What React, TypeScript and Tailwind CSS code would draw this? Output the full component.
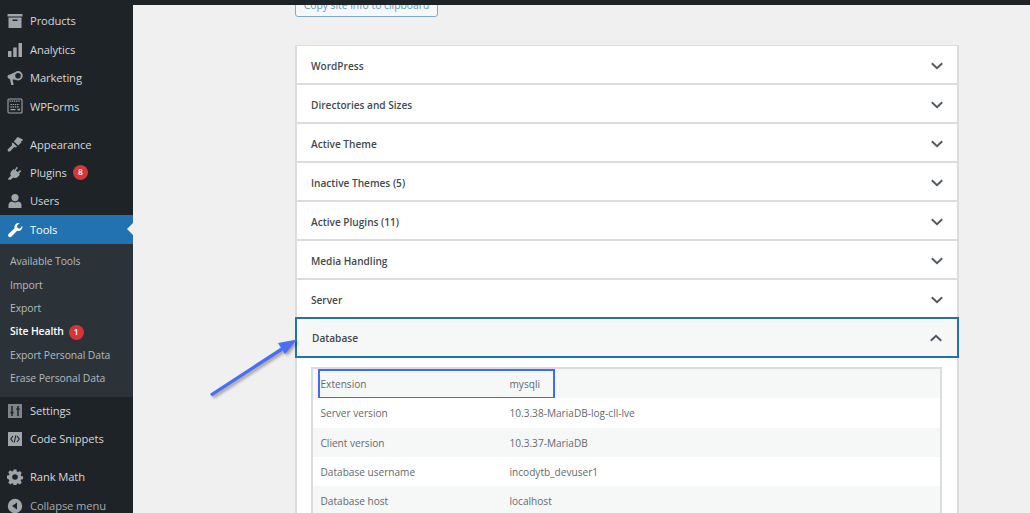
import React from "react";

const F = "[font-family:'Open_Sans','Noto_Sans',sans-serif]";

type IconProps = { className?: string };

const Box = ({ className }: IconProps) => (
  <svg viewBox="0 0 16 16" className={className} fill="currentColor">
    <path d="M0.5 1h15v2.5H0.5z" />
    <path fillRule="evenodd" d="M1.5 4.5h13V15h-13zM5.5 6.5v1.6h5V6.5z" />
  </svg>
);
const Bars = ({ className }: IconProps) => (
  <svg viewBox="0 0 16 16" className={className} fill="currentColor">
    <path d="M1 9h3.5v6H1zM6.2 5.5h3.5V15H6.2zM11.5 1H15v14h-3.5z" />
  </svg>
);
const Megaphone = ({ className }: IconProps) => (
  <svg viewBox="0 0 16 16" className={className} fill="currentColor">
    <path fillRule="evenodd" d="M11 1a4.5 4.5 0 1 1 0 9.5c-1 0-1.5-.3-2.4-.7L5.6 9.5 6.6 15H4.2L3 9.2C1.6 9 .5 8 .5 6.6S1.4 4.7 3 4.4L8 2.2C9 1.4 10 1 11 1zm0 2a2.8 2.8 0 1 0 0 5.6A2.8 2.8 0 0 0 11 3z" />
  </svg>
);
const Forms = ({ className }: IconProps) => (
  <svg viewBox="0 0 16 16" className={className} fill="none" stroke="currentColor">
    <rect x="1" y="1" width="14" height="14" rx="1" strokeWidth="1.1" />
    <path d="M2.5 3.2h11M3.5 6.5h9M3.5 8.8h9" strokeWidth="1.2" strokeDasharray="1.4 .8" />
    <path d="M3.5 11.6h5" strokeWidth="1.3" />
    <path d="M10.5 11.6h2.5" strokeWidth="1.6" />
  </svg>
);
const Brush = ({ className }: IconProps) => (
  <svg viewBox="0 0 16 16" className={className} fill="currentColor">
    <path d="M10.5 1 16 3.6l-1 1.6-1-.2.4 1.4-3.2 3.1-4.3-4.1z" />
    <path d="M5.8 6.4 10 10.5l-1 1-1.7-.5L3 15.5 1 15.5.6 13.5 5 9.2 4.7 7.4z" />
  </svg>
);
const Plug = ({ className }: IconProps) => (
  <svg viewBox="0 0 16 16" className={className} fill="currentColor">
    <path d="M9.8 1.8 11 3 8.8 5.2 10.8 7.2 13 5l1.2 1.2-2.2 2.3 1 1-2.2 2.4c-1.4 1.2-3 1.3-4.5.5L3.8 14.8H1.2v-1.4l2.6-2.6C3 9.3 3.2 7.7 4.4 6.3L6.6 4l1 1z" />
  </svg>
);
const User = ({ className }: IconProps) => (
  <svg viewBox="0 0 16 16" className={className} fill="currentColor">
    <circle cx="8" cy="4.6" r="3.6" />
    <path d="M1.5 15v-3c0-2 1.8-3.2 3.6-3.4 1.6 1.2 4.2 1.2 5.8 0 1.8.2 3.6 1.4 3.6 3.4v3z" />
  </svg>
);
const Wrench = ({ className }: IconProps) => (
  <svg viewBox="0 0 16 16" className={className} fill="currentColor">
    <path d="M15.2 3.8c.5 1.7 0 3.2-1.2 4.2-1.1.9-2.5 1.1-3.8.7L4.5 14.6c-.8.8-2.1.8-2.9 0-.8-.8-.7-2 .1-2.8l5.9-5.6C7.2 4.9 7.5 3.4 8.6 2.3 9.7 1.3 11.1.9 12.5 1.2L9.9 3.8l.6 2.3 2.3.6z" />
  </svg>
);
const Sliders = ({ className }: IconProps) => (
  <svg viewBox="0 0 16 16" className={className}>
    <rect x="1" y="1" width="14" height="14" fill="currentColor" opacity=".75" />
    <path d="M5 3v10M11 3v10M3.4 9.5h3.2M9.4 6h3.2" stroke="#1d2327" strokeWidth="1.5" fill="none" />
  </svg>
);
const Code = ({ className }: IconProps) => (
  <svg viewBox="0 0 16 16" className={className}>
    <rect x="1" y="1" width="14" height="14" fill="currentColor" />
    <path d="M6 5 3.8 8 6 11M10 5l2.2 3L10 11M8.8 4.5 7.2 11.5" stroke="#1d2327" strokeWidth="1.1" fill="none" />
  </svg>
);
const Gear = ({ className }: IconProps) => (
  <svg viewBox="0 0 16 16" className={className} fill="currentColor">
    <path
      fillRule="evenodd"
      d="M6.6.5h2.8l.4 2.1 1.2.5 1.8-1.2 2 2-1.2 1.8.5 1.2 2.1.4v2.8l-2.1.4-.5 1.2 1.2 1.8-2 2-1.8-1.2-1.2.5-.4 2.1H6.6l-.4-2.1-1.2-.5-1.8 1.2-2-2 1.2-1.8-.5-1.2L-.2 9.4V6.6l2.1-.4.5-1.2-1.2-1.8 2-2L5 2.4l1.2-.5zM8 5.2a2.8 2.8 0 1 0 0 5.6 2.8 2.8 0 0 0 0-5.6z"
    />
  </svg>
);
const Collapse = ({ className }: IconProps) => (
  <svg viewBox="0 0 16 16" className={className} fill="currentColor">
    <path fillRule="evenodd" d="M8 .8a7.2 7.2 0 1 1 0 14.4A7.2 7.2 0 0 1 8 .8zM10 4.4 5 8l5 3.6z" />
  </svg>
);
const Chevron = ({ up }: { up?: boolean }) => (
  <svg viewBox="0 0 12 8" className="w-3 h-2 text-[#50575e]" fill="none" stroke="currentColor" strokeWidth="1.9">
    <path d={up ? "M.8 6.8 6 1.8l5.2 5" : "M.8 1.2 6 6.2l5.2-5"} />
  </svg>
);

function MenuItem({
  icon: Icon,
  label,
  badge,
  active,
  dim,
}: {
  icon: (p: IconProps) => React.ReactElement;
  label: string;
  badge?: string;
  active?: boolean;
  dim?: boolean;
}) {
  return (
    <div className={`relative h-[28.4px] flex items-center pl-[7px] ${active ? "bg-[#2271b1] text-white" : dim ? "text-[#a7aaad]" : "text-[#d5d7d9]"}`}>
      <Icon className={`w-[16px] h-[16px] shrink-0 ${active ? "text-white" : "text-[#a0a5aa]"}`} />
      <span className="ml-[7px] pb-[0.5px] text-[11.2px] leading-none tracking-[-0.1px]">{label}</span>
      {badge && (
        <span className="ml-[6px] w-[15px] h-[15px] rounded-full bg-[#d63638] text-white text-[8.5px] font-semibold flex items-center justify-center">{badge}</span>
      )}
      {active && <span className="absolute right-0 top-[8px] border-y-[6px] border-y-transparent border-r-[6px] border-r-[#f0f0f1]" />}
    </div>
  );
}

function SubItem({ label, badge, current }: { label: string; badge?: string; current?: boolean }) {
  return (
    <div className={`h-[23.4px] flex items-center pl-[10px] pt-[1px] text-[10.4px] tracking-[-0.1px] ${current ? "text-white font-semibold" : "text-[#b4b9be]"}`}>
      {label}
      {badge && (
        <span className="ml-[5px] w-[15px] h-[15px] rounded-full bg-[#d63638] text-white text-[8.5px] font-semibold flex items-center justify-center">{badge}</span>
      )}
    </div>
  );
}

function Row({ label }: { label: string }) {
  return (
    <div className="h-[39px] flex items-center justify-between pl-[14px] pr-[14px] pt-[2px] border-b-2 border-[#dcdcde] bg-white">
      <span className="mt-[2px] text-[10.1px] font-semibold text-[#43494f]">{label}</span>
      <Chevron />
    </div>
  );
}

function InfoRow({ name, value, shaded, highlight }: { name: string; value: string; shaded?: boolean; highlight?: boolean }) {
  return (
    <div className={`relative h-[29.3px] flex items-center pt-[2px] text-[10.1px] text-[#646970] ${shaded ? "bg-[#f6f7f7]" : "bg-white"}`}>
      <span className="w-[197px] pl-[8px] shrink-0">{name}</span>
      <span>{value}</span>
      {highlight && <span className="absolute left-[5px] top-[0px] w-[237px] h-[30px] border-[2.5px] border-[#3f6bf5]" />}
    </div>
  );
}

export default function App() {
  return (
    <div className={`relative w-[1030px] h-[513px] overflow-hidden bg-[#f0f0f1] ${F}`}>
      <div className="relative z-10 h-[5px] bg-[#1d2327]" />
      <div className="flex h-[508px]">
        <aside className="w-[133px] shrink-0 bg-[#1d2327] pt-[2px]">
          <MenuItem icon={Box} label="Products" />
          <MenuItem icon={Bars} label="Analytics" />
          <MenuItem icon={Megaphone} label="Marketing" />
          <MenuItem icon={Forms} label="WPForms" />
          <div className="h-[9.6px]" />
          <MenuItem icon={Brush} label="Appearance" />
          <MenuItem icon={Plug} label="Plugins" badge="8" />
          <MenuItem icon={User} label="Users" />
          <MenuItem icon={Wrench} label="Tools" active />
          <div className="bg-[#2c3338] pt-[6px] h-[153px]">
            <SubItem label="Available Tools" />
            <SubItem label="Import" />
            <SubItem label="Export" />
            <SubItem label="Site Health" badge="1" current />
            <SubItem label="Export Personal Data" />
            <SubItem label="Erase Personal Data" />
          </div>
          <MenuItem icon={Sliders} label="Settings" />
          <MenuItem icon={Code} label="Code Snippets" />
          <div className="h-[9.6px]" />
          <MenuItem icon={Gear} label="Rank Math" />
          <MenuItem icon={Collapse} label="Collapse menu" dim />
        </aside>
        <main className="flex-1 pl-[162px] pr-[71px]">
          <div className="-mt-[10px] w-[143px] h-[22px] rounded-[3px] border border-[#7fa9cc] bg-[#f6f7f7] text-[#5f96c4] text-[10.3px] flex items-center justify-center">
            Copy site info to clipboard
          </div>
          <div className="mt-[28px] w-[664px] border-x-2 border-t-2 border-[#dcdcde]">
            <div className="-mt-[1px]">
              <Row label="WordPress" />
              <Row label="Directories and Sizes" />
              <Row label="Active Theme" />
              <Row label="Inactive Themes (5)" />
              <Row label="Active Plugins (11)" />
              <Row label="Media Handling" />
              <Row label="Server" />
            </div>
            <div className="-mx-[2px] -mt-[2px] h-[41px] flex items-center justify-between pl-[15px] pr-[15px] border-2 border-[#2271b1] bg-[#f6f7f7]">
              <span className="mt-[3px] text-[10.1px] font-semibold text-[#43494f]">Database</span>
              <Chevron up />
            </div>
            <div className="bg-white pt-[9px] pl-[14px] pr-[15px] h-[200px]">
              <div className="border-x-2 border-t-2 border-[#dcdcde] -ml-[0.5px]">
                <InfoRow name="Extension" value="mysqli" shaded highlight />
                <InfoRow name="Server version" value="10.3.38-MariaDB-log-cll-lve" />
                <InfoRow name="Client version" value="10.3.37-MariaDB" shaded />
                <InfoRow name="Database username" value="incodytb_devuser1" />
                <InfoRow name="Database host" value="localhost" shaded />
              </div>
            </div>
          </div>
        </main>
      </div>
      <svg className="absolute left-[205px] top-[332px] w-[100px] h-[70px] drop-shadow-[2px_2px_1.5px_rgba(0,0,0,0.35)]" viewBox="0 0 100 70" fill="#4a6ff5">
        <path d="M5.1 61.7 76 15.6l2 2.8L6.9 64.4z" />
        <path d="M92 7.5 73 11l7 11z" />
      </svg>
    </div>
  );
}
